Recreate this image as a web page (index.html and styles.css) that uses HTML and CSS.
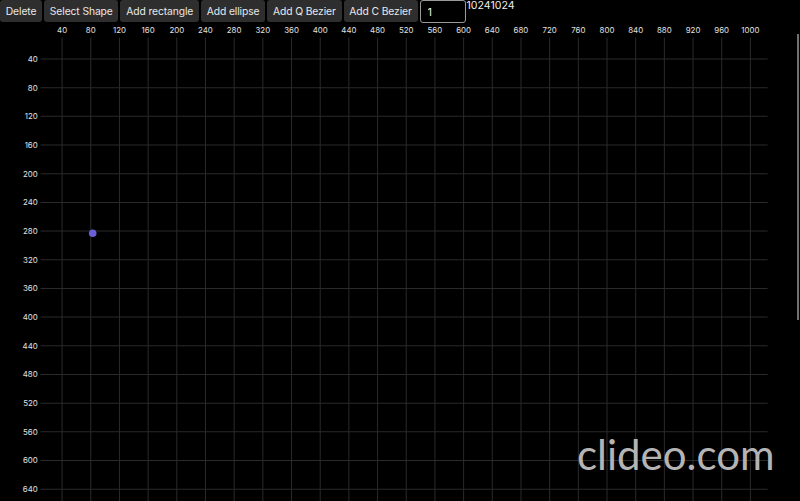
FILE: index.html
```html
<!DOCTYPE html>
<html>
<head>
<meta charset="utf-8">
<link rel="stylesheet" href="styles.css">
</head>
<body>
<div class="toolbar">
  <button class="btn">Delete</button>
  <button class="btn">Select Shape</button>
  <button class="btn">Add rectangle</button>
  <button class="btn">Add ellipse</button>
  <button class="btn">Add Q Bezier</button>
  <button class="btn">Add C Bezier</button>
  <input class="num" type="text" value="1">
  <span class="size">10241024</span>
</div>
<svg class="canvas" width="800" height="479" viewBox="0 0 800 479">
  <g transform="translate(33.4 8.3) scale(0.717)">
    <g class="grid">
      <line x1="40" y1="10" x2="40" y2="1024"/><line x1="80" y1="10" x2="80" y2="1024"/><line x1="120" y1="10" x2="120" y2="1024"/><line x1="160" y1="10" x2="160" y2="1024"/><line x1="200" y1="10" x2="200" y2="1024"/><line x1="240" y1="10" x2="240" y2="1024"/><line x1="280" y1="10" x2="280" y2="1024"/><line x1="320" y1="10" x2="320" y2="1024"/><line x1="360" y1="10" x2="360" y2="1024"/><line x1="400" y1="10" x2="400" y2="1024"/><line x1="440" y1="10" x2="440" y2="1024"/><line x1="480" y1="10" x2="480" y2="1024"/><line x1="520" y1="10" x2="520" y2="1024"/><line x1="560" y1="10" x2="560" y2="1024"/><line x1="600" y1="10" x2="600" y2="1024"/><line x1="640" y1="10" x2="640" y2="1024"/><line x1="680" y1="10" x2="680" y2="1024"/><line x1="720" y1="10" x2="720" y2="1024"/><line x1="760" y1="10" x2="760" y2="1024"/><line x1="800" y1="10" x2="800" y2="1024"/><line x1="840" y1="10" x2="840" y2="1024"/><line x1="880" y1="10" x2="880" y2="1024"/><line x1="920" y1="10" x2="920" y2="1024"/><line x1="960" y1="10" x2="960" y2="1024"/><line x1="1000" y1="10" x2="1000" y2="1024"/>
      <line y1="40" x1="10" y2="40" x2="1024"/><line y1="80" x1="10" y2="80" x2="1024"/><line y1="120" x1="10" y2="120" x2="1024"/><line y1="160" x1="10" y2="160" x2="1024"/><line y1="200" x1="10" y2="200" x2="1024"/><line y1="240" x1="10" y2="240" x2="1024"/><line y1="280" x1="10" y2="280" x2="1024"/><line y1="320" x1="10" y2="320" x2="1024"/><line y1="360" x1="10" y2="360" x2="1024"/><line y1="400" x1="10" y2="400" x2="1024"/><line y1="440" x1="10" y2="440" x2="1024"/><line y1="480" x1="10" y2="480" x2="1024"/><line y1="520" x1="10" y2="520" x2="1024"/><line y1="560" x1="10" y2="560" x2="1024"/><line y1="600" x1="10" y2="600" x2="1024"/><line y1="640" x1="10" y2="640" x2="1024"/><line y1="680" x1="10" y2="680" x2="1024"/>
    </g>
    <g class="xlabels">
      <text x="40" y="4">40</text><text x="80" y="4">80</text><text x="120" y="4">120</text><text x="160" y="4">160</text><text x="200" y="4">200</text><text x="240" y="4">240</text><text x="280" y="4">280</text><text x="320" y="4">320</text><text x="360" y="4">360</text><text x="400" y="4">400</text><text x="440" y="4">440</text><text x="480" y="4">480</text><text x="520" y="4">520</text><text x="560" y="4">560</text><text x="600" y="4">600</text><text x="640" y="4">640</text><text x="680" y="4">680</text><text x="720" y="4">720</text><text x="760" y="4">760</text><text x="800" y="4">800</text><text x="840" y="4">840</text><text x="880" y="4">880</text><text x="920" y="4">920</text><text x="960" y="4">960</text><text x="1000" y="4">1000</text>
    </g>
    <g class="ylabels">
      <text x="6" y="44">40</text><text x="6" y="84">80</text><text x="6" y="124">120</text><text x="6" y="164">160</text><text x="6" y="204">200</text><text x="6" y="244">240</text><text x="6" y="284">280</text><text x="6" y="324">320</text><text x="6" y="364">360</text><text x="6" y="404">400</text><text x="6" y="444">440</text><text x="6" y="484">480</text><text x="6" y="524">520</text><text x="6" y="564">560</text><text x="6" y="604">600</text><text x="6" y="644">640</text>
    </g>
    <circle class="point" cx="82.7" cy="283" r="5.3"/>
  </g>
</svg>
<div class="scrollthumb"></div>
<div class="watermark">clideo.com</div>
</body>
</html>
```
FILE: styles.css
```css
html, body {
  margin: 0;
  padding: 0;
  background: #000;
  width: 800px;
  height: 501px;
  overflow: hidden;
  font-family: "Inter", "Noto Sans", sans-serif;
}
.toolbar {
  display: flex;
  align-items: flex-start;
  gap: 2px;
  height: 22px;
}
.btn {
  height: 22px;
  padding: 0 5.75px;
  border: none;
  border-radius: 3px;
  background: #2e2e2e;
  color: #e8e8e8;
  font-family: "Inter", "Noto Sans", sans-serif;
  font-size: 10.3px;
  letter-spacing: -0.1px;
  line-height: 22px;
}
.num {
  box-sizing: border-box;
  width: 46px;
  height: 23px;
  margin: 0;
  padding: 0 7px;
  border: 1px solid #9a9a9a;
  border-radius: 3px;
  background: #000;
  color: #eee;
  font-family: "Inter", "Noto Sans", sans-serif;
  font-size: 11px;
}
.size {
  color: #eee;
  font-size: 10.6px;
  line-height: 12px;
  margin-left: -1px;
}
.canvas {
  display: block;
}
.grid line {
  stroke: #2a2a2a;
  stroke-width: 1.4;
}
.xlabels text {
  fill: #e0e0e0;
  font-family: "Inter", "Noto Sans", sans-serif;
  font-size: 11px;
  text-anchor: middle;
}
.ylabels text {
  fill: #e0e0e0;
  font-family: "Inter", "Noto Sans", sans-serif;
  font-size: 11px;
  text-anchor: end;
}
.point {
  fill: #6b5fd8;
}
.scrollthumb {
  position: absolute;
  left: 797px;
  top: 34px;
  width: 2px;
  height: 286px;
  background: #707070;
}
.watermark {
  position: absolute;
  left: 577px;
  top: 429px;
  font-family: "Lato", sans-serif;
  font-size: 42px;
  color: #b4b4b4;
  letter-spacing: 0;
}
```
